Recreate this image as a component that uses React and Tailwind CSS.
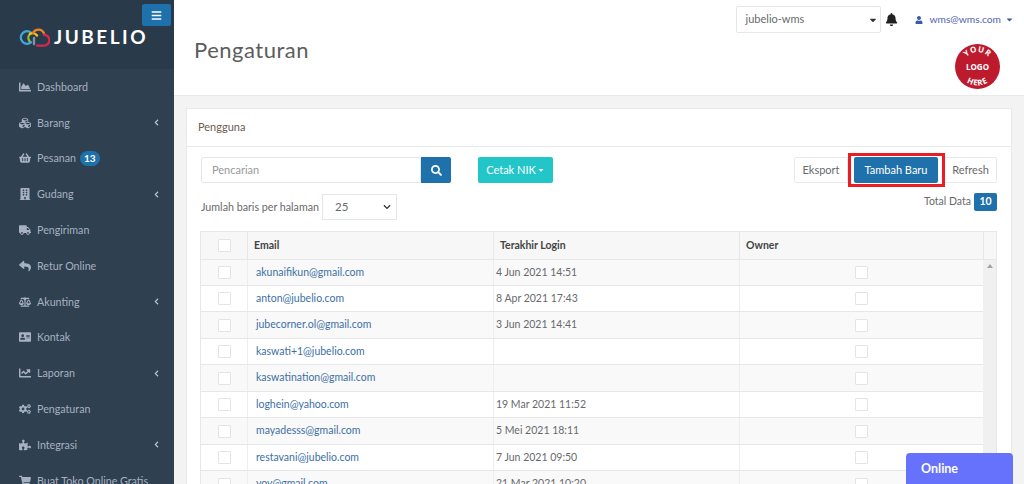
import React from "react";
import {
  FaAddressCard,
  FaBalanceScale,
  FaBars,
  FaBell,
  FaBuilding,
  FaCaretDown,
  FaChartArea,
  FaChartLine,
  FaChevronLeft,
  FaChevronDown,
  FaCogs,
  FaCubes,
  FaPuzzlePiece,
  FaReply,
  FaSearch,
  FaShoppingBasket,
  FaShoppingCart,
  FaTruck,
  FaUser,
} from "react-icons/fa";

const menu = [
  { label: "Dashboard", icon: FaChartArea },
  { label: "Barang", icon: FaCubes, arrow: true },
  { label: "Pesanan", icon: FaShoppingBasket, badge: "13" },
  { label: "Gudang", icon: FaBuilding, arrow: true },
  { label: "Pengiriman", icon: FaTruck },
  { label: "Retur Online", icon: FaReply },
  { label: "Akunting", icon: FaBalanceScale, arrow: true },
  { label: "Kontak", icon: FaAddressCard },
  { label: "Laporan", icon: FaChartLine, arrow: true },
  { label: "Pengaturan", icon: FaCogs },
  { label: "Integrasi", icon: FaPuzzlePiece, arrow: true },
  { label: "Buat Toko Online Gratis", icon: FaShoppingCart },
];

const rows = [
  { email: "akunaifikun@gmail.com", login: "4 Jun 2021 14:51", h: "h-[26px]" },
  { email: "anton@jubelio.com", login: "8 Apr 2021 17:43", h: "h-[26px]" },
  { email: "jubecorner.ol@gmail.com", login: "3 Jun 2021 14:41", h: "h-[27px]" },
  { email: "kaswati+1@jubelio.com", login: "", h: "h-[26px]" },
  { email: "kaswatination@gmail.com", login: "", h: "h-[27px]" },
  { email: "loghein@yahoo.com", login: "19 Mar 2021 11:52", h: "h-[26px]" },
  { email: "mayadesss@gmail.com", login: "5 Mei 2021 18:11", h: "h-[27px]" },
  { email: "restavani@jubelio.com", login: "7 Jun 2021 09:50", h: "h-[26px]" },
  { email: "yoy@gmail.com", login: "21 Mar 2021 10:20", h: "h-[27px]" },
];

const Check = () => (
  <span className="block w-[13px] h-[13px] bg-white border border-[#e4e4e4] rounded-[1px]" />
);

const Logo = () => (
  <svg width="31" height="21" viewBox="0 0 31 21" fill="none" strokeWidth="2.4" strokeLinecap="round" className="shrink-0">
    <path d="M12 5.7A6.2 6.2 0 1 0 12 15.3" stroke="#3fa7dc" />
    <path d="M10.5 14A5.2 5.2 0 0 1 11 7" stroke="#8bbb3a" />
    <path d="M11 7A5.2 5.2 0 0 1 18 8.5" stroke="#f2c014" />
    <path d="M14 6A6 6 0 0 1 25 6.5" stroke="#e8842c" />
    <path d="M25 7.8A5.2 5.2 0 0 1 25 18.6H18" stroke="#d8264f" />
    <path d="M15 11V17" stroke="#7f93a8" />
  </svg>
);

const YourLogo = () => (
  <svg width="45" height="45" viewBox="0 0 45 45" className="block">
    <circle cx="22.5" cy="22.5" r="22.5" fill="#bd1a2e" />
    <defs>
      <path id="logo-top" d="M8 22.5a14.5 14.5 0 0 1 29 0" />
      <path id="logo-bottom" d="M3.5 22.5a19 19 0 0 0 38 0" />
    </defs>
    <text fill="#fff" fontSize="8" fontWeight="700" letterSpacing="0.6" fontFamily="'Open Sans', sans-serif" textAnchor="middle">
      <textPath href="#logo-top" startOffset="50%">YOUR</textPath>
    </text>
    <text x="22.5" y="25.5" fill="#fff" fontSize="8" fontWeight="700" fontFamily="'Open Sans', sans-serif" textAnchor="middle">
      LOGO
    </text>
    <text fill="#fff" fontSize="8" fontWeight="700" letterSpacing="0.6" fontFamily="'Open Sans', sans-serif" textAnchor="middle">
      <textPath href="#logo-bottom" startOffset="50%">HERE</textPath>
    </text>
  </svg>
);

const Sidebar = () => (
  <aside className="w-[174px] h-full shrink-0 bg-[#2f4050] overflow-hidden">
    <div className="h-[69px] bg-[#293a4a] relative">
      <button className="absolute left-[142px] top-[4px] w-[29px] h-[22px] rounded-[2px] bg-[#1f71ab] flex items-center justify-center text-white">
        <FaBars size={11} />
      </button>
      <div className="flex items-center pl-[19px] pt-[24px] gap-[4px]">
        <Logo />
        <span className="text-white text-[19px] font-bold tracking-[2.5px] leading-[26px]">JUBELIO</span>
      </div>
    </div>
    <nav>
      {menu.map((item) => {
        const Icon = item.icon;
        return (
          <div key={item.label} className="h-[35.8px] flex items-center pl-[19px] pr-[14px] text-[#a7b1c2] text-[10.7px]">
            <span className="w-[18px] flex shrink-0"><Icon size={12} /></span>
            <span className="whitespace-nowrap">{item.label}</span>
            {item.badge && (
              <span className="ml-[4px] px-[4px] h-[15px] leading-[15px] rounded-full bg-[#1f71ab] text-white text-[10px] font-bold">
                {item.badge}
              </span>
            )}
            {item.arrow && <FaChevronLeft size={7} className="ml-auto text-[#c3cbd6]" />}
          </div>
        );
      })}
    </nav>
  </aside>
);

const Header = () => (
  <header className="h-[96px] shrink-0 bg-white border-b border-[#e7eaec] flex justify-between pl-[20px] pr-[25px]">
    <h1 className="text-[22px] text-[#5d5d5d] pt-[35px] leading-[30px] tracking-[0.5px]">Pengaturan</h1>
    <div className="flex flex-col items-end">
      <div className="flex items-center pt-[6px] mr-[-15px]">
        <div className="w-[145px] h-[27px] bg-white border border-[#e5e6e7] rounded-[2px] flex items-center justify-between pl-[9px] pr-[2px] text-[11px] text-[#676a6c]">
          jubelio-wms
          <FaCaretDown size={10} className="text-[#333]" />
        </div>
        <FaBell size={13} className="ml-[4px] text-[#222]" />
        <FaUser size={8} className="ml-[17px] text-[#3b5aa8]" />
        <span className="ml-[7px] text-[10.2px] text-[#5264ae]">wms@wms.com</span>
        <FaCaretDown size={9} className="ml-[4px] text-[#3b5aa8]" />
      </div>
      <div className="mt-[11px] mr-[-1px]"><YourLogo /></div>
    </div>
  </header>
);

const Toolbar = () => (
  <div className="flex justify-between">
    <div>
      <div className="flex items-start">
        <div className="flex">
          <div className="w-[220px] h-[26px] bg-white border border-[#e5e6e7] rounded-l-[2px] flex items-center pl-[10px] text-[11px] text-[#999]">
            Pencarian
          </div>
          <button className="w-[30px] h-[26px] bg-[#1f71ab] rounded-r-[2px] flex items-center justify-center text-white">
            <FaSearch size={11} />
          </button>
        </div>
        <button className="ml-[27px] w-[75px] h-[26px] bg-[#23c6c8] rounded-[2px] flex items-center justify-center gap-[1px] text-white text-[11px]">
          Cetak NIK
          <FaCaretDown size={8} />
        </button>
      </div>
      <div className="flex items-center mt-[11px]">
        <span className="text-[10.7px] text-[#676a6c] w-[121px] whitespace-nowrap">Jumlah baris per halaman</span>
        <div className="w-[75px] h-[26px] bg-white border border-[#e5e6e7] flex items-center justify-between pl-[12px] pr-[5px] text-[11.5px] text-[#676a6c]">
          25
          <FaChevronDown size={8} className="text-[#333]" />
        </div>
      </div>
    </div>
    <div className="flex flex-col items-end">
      <div className="flex items-center h-[26px]">
        <div className="h-[26px] w-[54px] bg-white border border-[#e7eaec] rounded-l-[2px] flex items-center justify-center text-[11px] text-[#676a6c]">
          Eksport
        </div>
        <div className="h-[34px] w-[97px] pl-[3px] pr-[4px] border-[3px] border-[#ed1c24] flex items-center bg-white relative z-10">
          <div className="h-[26px] flex-1 bg-[#1f71ab] rounded-[2px] flex items-center justify-center text-[11px] text-white">
            Tambah Baru
          </div>
        </div>
        <div className="h-[26px] w-[52px] bg-white border border-l-0 border-[#e7eaec] rounded-r-[2px] flex items-center justify-center text-[11px] text-[#676a6c]">
          Refresh
        </div>
      </div>
      <div className="flex items-center mt-[10px] gap-[3px]">
        <span className="text-[10.5px] text-[#676a6c]">Total Data</span>
        <span className="w-[23px] h-[18px] bg-[#1f71ab] rounded-[2px] text-white text-[10.5px] font-bold flex items-center justify-center">10</span>
      </div>
    </div>
  </div>
);

const DataTable = () => (
  <div className="mt-[11px] -ml-px border border-b-0 border-[#e7e7e7] flex text-[10.5px]">
    <div className="flex-1 min-w-0">
      <div className="grid grid-cols-[47px_246px_246px_1fr] h-[28px] bg-[#f7f7f7] border-b border-[#e7e7e7] font-bold text-[#444]">
        <div className="flex items-center justify-center border-r border-[#e7e7e7]"><Check /></div>
        <div className="flex items-center pl-[6px] border-r border-[#e7e7e7]">Email</div>
        <div className="flex items-center pl-[6px] border-r border-[#e7e7e7]">Terakhir Login</div>
        <div className="flex items-center pl-[6px]">Owner</div>
      </div>
      {rows.map((row, i) => (
        <div
          key={row.email}
          className={`grid grid-cols-[47px_246px_246px_1fr] ${row.h} border-b border-[#e7e7e7] ${i % 2 === 0 ? "bg-[#f9f9f9]" : "bg-white"}`}
        >
          <div className="flex items-center justify-center border-r border-[#eeeeee]"><Check /></div>
          <div className="flex items-center pl-[8px] border-r border-[#eeeeee] text-[#3d6fa5]">{row.email}</div>
          <div className="flex items-center pl-[2px] border-r border-[#eeeeee] text-[#676a6c]">{row.login}</div>
          <div className="flex items-center justify-center"><Check /></div>
        </div>
      ))}
    </div>
    <div className="w-[13px] shrink-0 bg-[#f0f0f0]">
      <div className="h-[28px] bg-[#f7f7f7] border-l border-b border-[#e7e7e7]" />
      <div className="flex justify-center pt-[4px]">
        <span className="w-0 h-0 border-x-[3px] border-x-transparent border-b-[4px] border-b-[#a3a3a3]" />
      </div>
    </div>
  </div>
);

export default function App() {
  return (
    <div className="w-[1024px] h-[484px] overflow-hidden flex bg-[#f3f3f4] relative font-['Lato','Noto_Sans',sans-serif]">
      <Sidebar />
      <main className="flex-1 min-w-0 flex flex-col">
        <Header />
        <div className="pt-[12px] pl-[12px] pr-[12px]">
          <div className="bg-white border border-[#e7eaec]">
            <div className="h-[38px] border-b border-[#e7eaec] flex items-center pl-[11px] text-[11px] text-[#6b5b50]">Pengguna</div>
            <div className="pt-[10px] pl-[14px] pr-[14px]">
              <Toolbar />
              <DataTable />
            </div>
          </div>
        </div>
      </main>
      <div className="absolute left-[906px] top-[453px] w-[107px] h-[40px] bg-[#6672fb] rounded-t-[4px] pl-[15px] pt-[7px] text-white text-[12.5px] font-bold">
        Online
      </div>
    </div>
  );
}
